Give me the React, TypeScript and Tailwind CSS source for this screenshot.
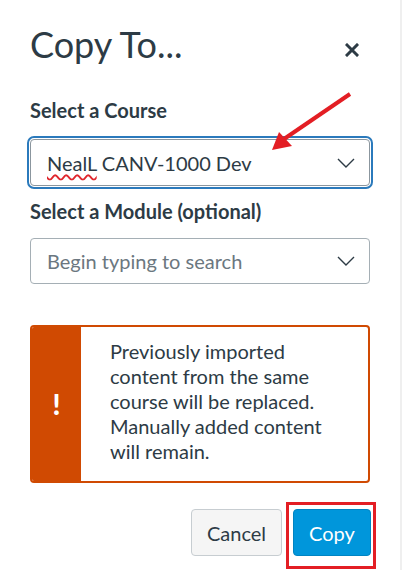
import React from "react";

const Chevron = () => (
  <svg width="18" height="10" viewBox="0 0 18 10" fill="none">
    <path d="M1 1l8 8 8-8" stroke="#2D3B45" strokeWidth="1.4" />
  </svg>
);

const App = () => {
  return (
    <div
      className="relative w-[402px] h-[570px] overflow-hidden bg-white border-r-2 border-[#EFEFEF] pl-[30px] pr-[30px] text-[#2D3B45]"
      style={{ fontFamily: "Lato, 'Noto Sans', sans-serif" }}
    >
      {/* header */}
      <div className="flex justify-between items-start mt-[23px] h-[43px]">
        <h1 className="text-[36px] leading-[1.2] font-normal">Copy To...</h1>
        <svg className="mt-[20px] mr-[11px]" width="14" height="14" viewBox="0 0 14 14">
          <path d="M2 2l10 10M12 2L2 12" stroke="#2D3B45" strokeWidth="3" strokeLinecap="square" />
        </svg>
      </div>

      <label className="block mt-[32px] text-[20px] leading-[1.2] font-bold">Select a Course</label>
      <div className="mt-[14px] -mx-[3px] rounded-[7px] border-2 border-[#2B7ABC] p-px">
        <div className="flex items-center justify-between h-[47px] rounded-[4px] border border-[#8B969E] pl-[16px] pr-[14px]">
          <span className="text-[20px]">
            <span className="underline decoration-wavy decoration-[#E0262D] decoration-[1.5px] underline-offset-[3px]">NealL</span>{" "}
            CANV-1000 Dev
          </span>
          <Chevron />
        </div>
      </div>

      <label className="block mt-[10px] text-[20px] leading-[1.2] font-bold">Select a Module (optional)</label>
      <div className="mt-[15px] flex items-center justify-between h-[46px] rounded-[4px] border border-[#A5AFB5] pl-[16px] pr-[14px]">
        <span className="text-[20px] text-[#6B7780]">Begin typing to search</span>
        <Chevron />
      </div>

      <div className="mt-[41px] flex h-[158px] rounded-[4px] border-2 border-[#D04A02] overflow-hidden">
        <div className="w-[49px] shrink-0 bg-[#D04A02] flex items-center justify-center text-white text-[28px] font-black">!</div>
        <p className="pl-[29px] pr-[24px] pt-[12px] text-[20px] leading-[25px]">
          Previously imported content from the same course will be replaced. Manually added content will remain.
        </p>
      </div>

      <div className="mt-[19px] flex justify-end items-start -mr-[6px]">
        <button className="mt-[7px] w-[91px] h-[47px] rounded-[4px] border border-[#C7CDD1] bg-[#F5F5F5] text-[20px] text-[#2D3B45]">
          Cancel
        </button>
        <div className="ml-[4px] border-[3px] border-[#E31E24] pt-[4px] pl-[4px] pr-[2px] pb-[10px]">
          <button className="w-[78px] h-[47px] rounded-[4px] border border-[#0084C2] bg-[#0096DB] text-[20px] text-white">
            Copy
          </button>
        </div>
      </div>

      {/* annotation arrow */}
      <svg className="absolute left-0 top-0 pointer-events-none" width="402" height="570">
        <line x1="350" y1="94" x2="284" y2="139" stroke="#E31E24" strokeWidth="4" />
        <polygon points="272,150 279,132 292,146" fill="#E31E24" />
      </svg>
    </div>
  );
};

export default App;
